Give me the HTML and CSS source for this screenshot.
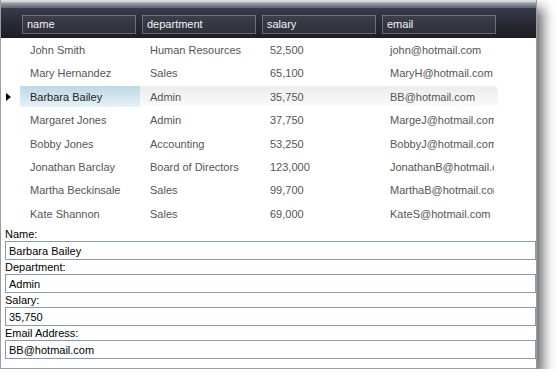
FILE: index.html
```html
<!DOCTYPE html>
<html lang="en">
<head>
    <meta charset="UTF-8">
    <meta name="viewport" content="width=device-width, initial-scale=1.0">
    <title>Employees</title>
    <link rel="stylesheet" href="styles.css">
</head>
<body>
    <div class="window">
        <div class="grid-header">
            <div class="header-cell">name</div>
            <div class="header-cell">department</div>
            <div class="header-cell">salary</div>
            <div class="header-cell">email</div>
        </div>

        <div class="grid-body">
            <div class="row">
                <div class="indicator"></div>
                <div class="cells">
                    <div class="cell">John Smith</div>
                    <div class="cell">Human Resources</div>
                    <div class="cell">52,500</div>
                    <div class="cell email">john@hotmail.com</div>
                </div>
            </div>
            <div class="row">
                <div class="indicator"></div>
                <div class="cells">
                    <div class="cell">Mary Hernandez</div>
                    <div class="cell">Sales</div>
                    <div class="cell">65,100</div>
                    <div class="cell email">MaryH@hotmail.com</div>
                </div>
            </div>
            <div class="row selected">
                <div class="indicator"><span class="arrow"></span></div>
                <div class="cells">
                    <div class="cell current">Barbara Bailey</div>
                    <div class="cell">Admin</div>
                    <div class="cell">35,750</div>
                    <div class="cell email">BB@hotmail.com</div>
                </div>
            </div>
            <div class="row">
                <div class="indicator"></div>
                <div class="cells">
                    <div class="cell">Margaret Jones</div>
                    <div class="cell">Admin</div>
                    <div class="cell">37,750</div>
                    <div class="cell email">MargeJ@hotmail.com</div>
                </div>
            </div>
            <div class="row">
                <div class="indicator"></div>
                <div class="cells">
                    <div class="cell">Bobby Jones</div>
                    <div class="cell">Accounting</div>
                    <div class="cell">53,250</div>
                    <div class="cell email">BobbyJ@hotmail.com</div>
                </div>
            </div>
            <div class="row">
                <div class="indicator"></div>
                <div class="cells">
                    <div class="cell">Jonathan Barclay</div>
                    <div class="cell">Board of Directors</div>
                    <div class="cell">123,000</div>
                    <div class="cell email">JonathanB@hotmail.com</div>
                </div>
            </div>
            <div class="row">
                <div class="indicator"></div>
                <div class="cells">
                    <div class="cell">Martha Beckinsale</div>
                    <div class="cell">Sales</div>
                    <div class="cell">99,700</div>
                    <div class="cell email">MarthaB@hotmail.com</div>
                </div>
            </div>
            <div class="row">
                <div class="indicator"></div>
                <div class="cells">
                    <div class="cell">Kate Shannon</div>
                    <div class="cell">Sales</div>
                    <div class="cell">69,000</div>
                    <div class="cell email">KateS@hotmail.com</div>
                </div>
            </div>
        </div>

        <form class="details">
            <label for="f-name">Name:</label>
            <input id="f-name" type="text" value="Barbara Bailey" readonly>
            <label for="f-dept">Department:</label>
            <input id="f-dept" type="text" value="Admin" readonly>
            <label for="f-salary">Salary:</label>
            <input id="f-salary" type="text" value="35,750" readonly>
            <label for="f-email">Email Address:</label>
            <input id="f-email" type="text" value="BB@hotmail.com" readonly>
        </form>
    </div>
</body>
</html>
```

FILE: styles.css
```css
body {
    margin: 0;
    padding: 0;
    background-color: #fff;
    font-family: "Liberation Sans", Arial, sans-serif;
    font-size: 11px;
}

.window {
    width: 535px;
    height: 368px;
    border: 1px solid #9c9c9c;
    border-top: none;
    background-color: #fff;
    box-shadow: 6px 8px 12px rgba(0, 0, 0, 0.6);
    overflow: hidden;
}

/* column headers */
.grid-header {
    height: 38px;
    box-sizing: border-box;
    padding: 15px 0 0 19px;
    display: flex;
    align-items: flex-start;
    background: linear-gradient(#e2e2e2 0, #d2d2d2 2px, #9a9dab 3px, #5f6374 8px, #383b4a 8px, #262834 24px, #1c1e27 38px);
}

.header-cell {
    width: 114px;
    height: 19px;
    box-sizing: border-box;
    margin: 0 4px 0 2px;
    padding-left: 4px;
    line-height: 17px;
    color: #f4f4f4;
    border: 1px solid rgba(255, 255, 255, 0.28);
    background-color: rgba(255, 255, 255, 0.07);
}

/* rows */
.row {
    height: 23.4px;
    display: flex;
    color: #555;
}

.indicator {
    width: 19px;
    display: flex;
    align-items: center;
}

.arrow {
    margin: 1px 0 0 5px;
    width: 0;
    height: 0;
    border-left: 5px solid #000;
    border-top: 4.5px solid transparent;
    border-bottom: 4.5px solid transparent;
}

.cells {
    display: flex;
    width: 478px;
}

.cell {
    width: 120px;
    box-sizing: border-box;
    padding: 1px 0 0 10px;
    line-height: 22.4px;
    white-space: nowrap;
    overflow: hidden;
}

.cell.email {
    width: 114px;
}

.row.selected .cells {
    margin: 1px 0;
    border-radius: 0 4px 4px 0;
    background: linear-gradient(#ececec, #fbfbfb);
}

.row.selected .cell {
    line-height: 20.4px;
}

.row.selected .cell.current {
    background: linear-gradient(#bcd7e5, #e6f2f8);
    color: #222;
}

/* detail form */
.details {
    margin: 0;
    padding: 2px 0 0 4px;
}

.details label {
    display: block;
    line-height: 14px;
    color: #000;
}

.details input {
    display: block;
    width: 100%;
    height: 19px;
    box-sizing: border-box;
    margin: 0;
    padding: 0 3px;
    border: 1px solid #7f9db9;
    font-family: "Liberation Sans", Arial, sans-serif;
    font-size: 11px;
    color: #000;
    background-color: #fff;
    outline: none;
}
```
